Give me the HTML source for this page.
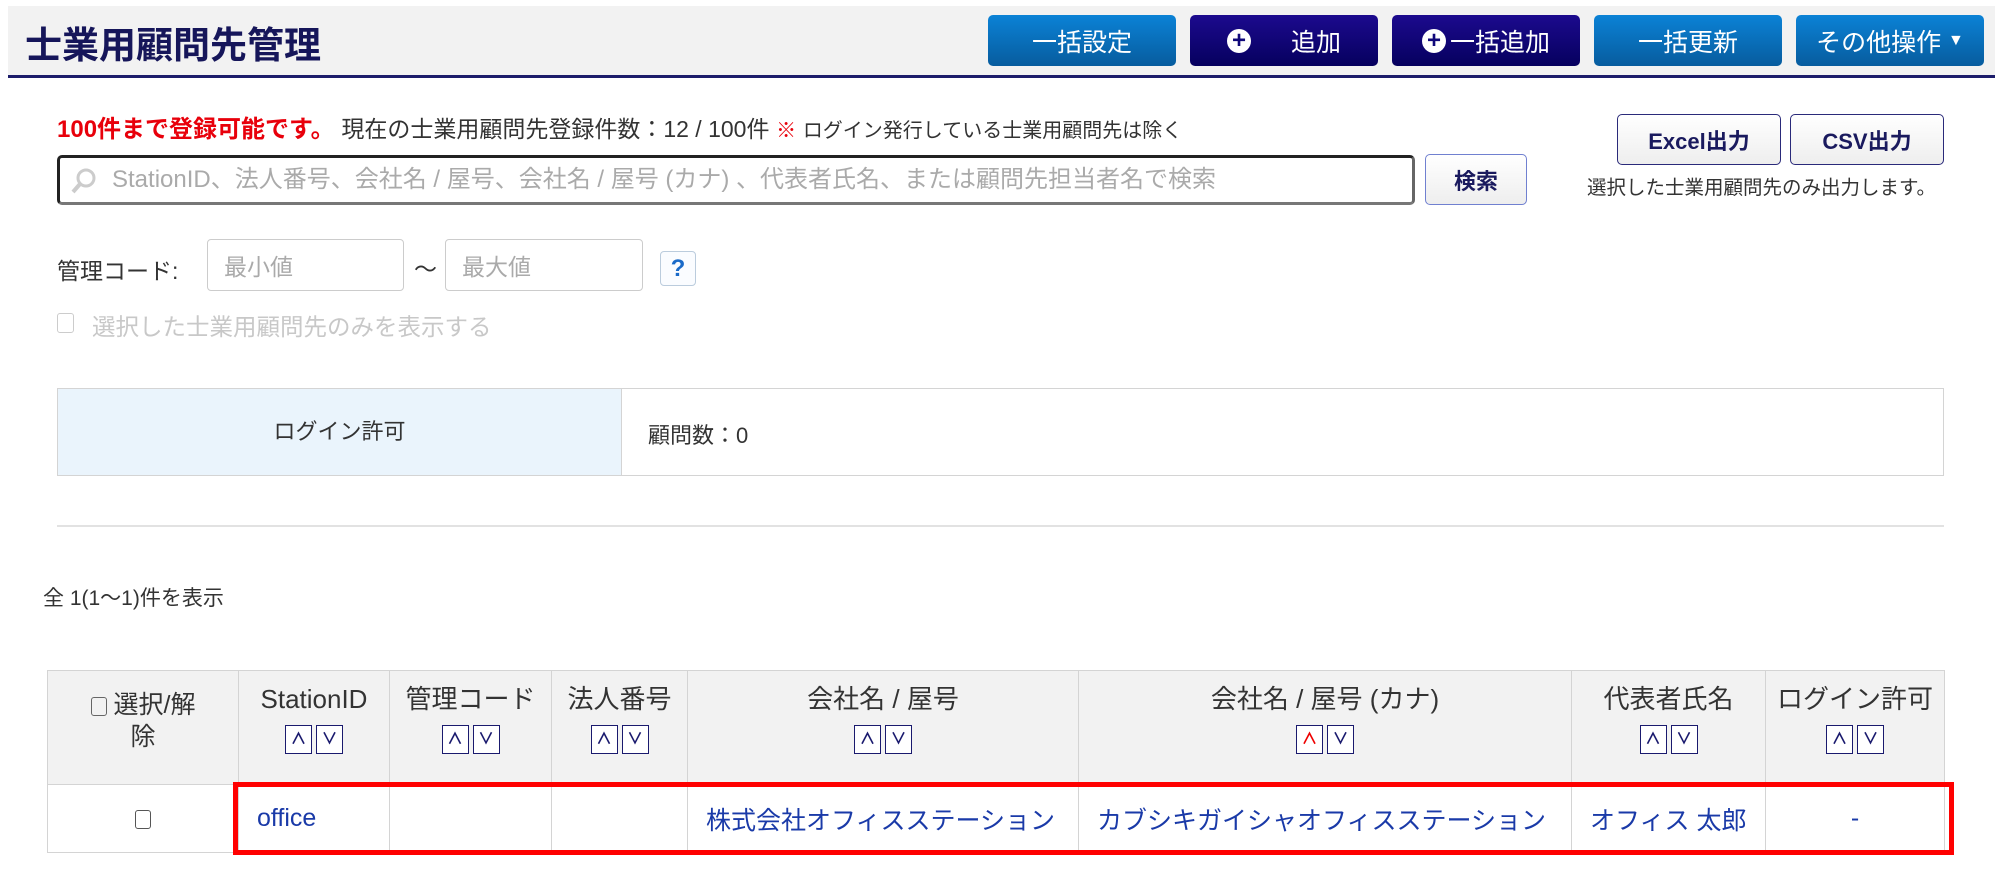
<!DOCTYPE html>
<html><head><meta charset="utf-8"><style>
*{box-sizing:border-box;margin:0;padding:0}
body{width:2000px;height:894px;background:#fff;position:relative;overflow:hidden;font-family:"Liberation Sans","Noto Sans CJK JP",sans-serif;color:#333}
.a{position:absolute;white-space:nowrap}
.hdr{left:8px;top:6px;width:1987px;height:72px;background:#f2f2f2;border-bottom:3px solid #1c1c6a}
.btn{position:absolute;top:15px;height:51px;width:188px;border-radius:5px;color:#fff;font-size:25px;display:flex;align-items:center;justify-content:center}
.bl{background:linear-gradient(#0b82d6,#075c9e)}
.nv{background:linear-gradient(#1c0a8e,#06005e)}
.plus{display:inline-block;width:24px;height:24px;border-radius:50%;background:#fff;color:#10087a;font-weight:bold;font-size:24px;line-height:24px;text-align:center;margin-right:8px}
.wb{position:absolute;border:1.5px solid #2a2a7a;border-radius:5px;background:linear-gradient(#fff,#eee);color:#1a1a5e;font-weight:bold;font-size:22px;display:flex;align-items:center;justify-content:center}
.inp{position:absolute;border:1px solid #ccc;border-radius:4px;color:#aaa;font-size:23px;padding-left:16px;display:flex;align-items:center}
table{position:absolute;left:47px;top:670px;border-collapse:collapse;font-size:25px}
td{border:1.5px solid #d4d4d4;text-align:center;vertical-align:middle}
thead td{background:#f2f2f2;height:114px;color:#333;vertical-align:top;padding-top:12px;line-height:32px;font-size:26px}
tbody td{height:68px;color:#1a3aa8;text-align:left;padding-left:18px}
.s{display:inline-block;width:27px;height:29px;border:1.5px solid #1a1a6e;background:#fff;color:#1a1a6e;font-size:16px;line-height:27px;margin:10px 2px 0;font-weight:bold}
.cb{display:inline-block;width:16px;height:19px;border:1.5px solid #666;border-radius:3px;vertical-align:middle}
</style></head><body>
<div class="a hdr"></div>
<div class="a" style="left:25px;top:15px;font-size:37px;font-weight:bold;color:#16165a">士業用顧問先管理</div>
<div class="btn bl" style="left:988px">一括設定</div>
<div class="btn nv" style="left:1190px"><span class="plus" style="margin-right:40px">+</span>追加</div>
<div class="btn nv" style="left:1392px"><span class="plus" style="margin-right:4px">+</span>一括追加</div>
<div class="btn bl" style="left:1594px">一括更新</div>
<div class="btn bl" style="left:1796px">その他操作&nbsp;<span style="font-size:16px">▼</span></div>

<div class="a" style="left:57px;top:109px;font-size:24px"><b style="color:#e8000b">100件まで登録可能です。</b> <span style="font-size:23px">現在の士業用顧問先登録件数：12 / 100件</span> <b style="color:#e8000b;font-size:20px">※</b> <span style="font-size:20px">ログイン発行している士業用顧問先は除く</span></div>
<div class="a" style="left:57px;top:155px;width:1358px;height:50px;border:3px solid #222;border-bottom-color:#777;border-right-color:#666;border-radius:5px;color:#aaa;font-size:24px;padding-left:52px;line-height:43px">StationID、法人番号、会社名 / 屋号、会社名 / 屋号 (カナ) 、代表者氏名、または顧問先担当者名で検索
<svg style="position:absolute;left:10px;top:9px" width="28" height="28" viewBox="0 0 28 28"><circle cx="16" cy="11" r="8" fill="none" stroke="#ccc" stroke-width="3"/><line x1="10" y1="17" x2="3" y2="25" stroke="#ccc" stroke-width="4"/></svg></div>
<div class="wb" style="left:1425px;top:154px;width:102px;height:51px;border-color:#7080d0">検索</div>
<div class="wb" style="left:1617px;top:114px;width:164px;height:51px">Excel出力</div>
<div class="wb" style="left:1790px;top:114px;width:154px;height:51px">CSV出力</div>
<div class="a" style="left:1587px;top:171px;font-size:19.5px">選択した士業用顧問先のみ出力します。</div>

<div class="a" style="left:57px;top:252px;font-size:23px">管理コード:</div>
<div class="inp" style="left:207px;top:239px;width:197px;height:52px">最小値</div>
<div class="a" style="left:414px;top:250px;font-size:23px">～</div>
<div class="inp" style="left:445px;top:239px;width:198px;height:52px">最大値</div>
<div class="a" style="left:660px;top:251px;width:36px;height:35px;border:1px solid #bcd;border-radius:4px;color:#1a6ac8;font-weight:bold;font-size:24px;text-align:center;line-height:33px;background:#fafcff">?</div>
<div class="a" style="left:57px;top:313px;width:17px;height:20px;border:1.5px solid #ccc;border-radius:3px"></div>
<div class="a" style="left:92px;top:308px;font-size:23.5px;color:#c8c8c8">選択した士業用顧問先のみを表示する</div>

<div class="a" style="left:57px;top:388px;width:1887px;height:88px;border:1.5px solid #d4d4d4"></div>
<div class="a" style="left:58px;top:389px;width:564px;height:86px;background:#eaf4fc;border-right:1.5px solid #d4d4d4;font-size:22px;text-align:center;line-height:86px">ログイン許可</div>
<div class="a" style="left:648px;top:418px;font-size:22px">顧問数：0</div>
<div class="a" style="left:57px;top:525px;width:1887px;height:2px;background:#e2e2e2"></div>
<div class="a" style="left:43px;top:582px;font-size:21px">全 1(1～1)件を表示</div>

<table>
<colgroup><col style="width:191px"><col style="width:151px"><col style="width:162px"><col style="width:136px"><col style="width:391px"><col style="width:493px"><col style="width:194px"><col style="width:179px"></colgroup>
<thead><tr>
<td style="padding-top:18px;font-size:25px"><span class="cb"></span> 選択/解<br>除</td>
<td>StationID<br><span class="s">∧</span><span class="s">∨</span></td>
<td>管理コード<br><span class="s">∧</span><span class="s">∨</span></td>
<td>法人番号<br><span class="s">∧</span><span class="s">∨</span></td>
<td>会社名 / 屋号<br><span class="s">∧</span><span class="s">∨</span></td>
<td>会社名 / 屋号 (カナ)<br><span class="s" style="color:#e00">∧</span><span class="s">∨</span></td>
<td>代表者氏名<br><span class="s">∧</span><span class="s">∨</span></td>
<td>ログイン許可<br><span class="s">∧</span><span class="s">∨</span></td>
</tr></thead>
<tbody><tr>
<td style="text-align:center;padding:0"><span class="cb" style="border-color:#555"></span></td>
<td>office</td>
<td></td><td></td>
<td>株式会社オフィスステーション</td>
<td>カブシキガイシャオフィスステーション</td>
<td>オフィス 太郎</td>
<td style="text-align:center;padding:0">-</td>
</tr></tbody>
</table>
<div class="a" style="left:233px;top:782px;width:1721px;height:73px;border:5px solid #f00"></div>
</body></html>
